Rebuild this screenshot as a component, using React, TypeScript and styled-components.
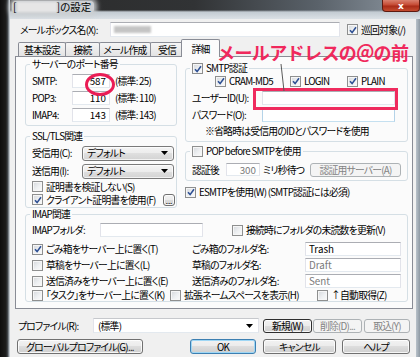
import React from "react";
import styled, { createGlobalStyle, css } from "styled-components";

const FONT = `"Noto Sans CJK JP", "Noto Sans", sans-serif`;

const GlobalStyle = createGlobalStyle`
  * { box-sizing: border-box; }
  html, body { margin: 0; padding: 0; }
  body { background: #141414; font-family: ${FONT}; }
`;

const Frame = styled.div`
  position: relative;
  width: 420px;
  height: 357px;
  overflow: hidden;
  display: flex;
  background: #141414;
  font-family: ${FONT};
  font-size: 9.8px;
  font-feature-settings: "palt" 1;
  letter-spacing: -0.75px;
  line-height: 12px;
  color: #000;
`;

const DarkEdge = styled.div`
  width: 10px;
  flex: none;
  background: linear-gradient(90deg, #0e0e0e 0, #1d1d1d 6px, #4a5056 8px, #aab2b9 9px, #d2d8de 10px);
`;

const Window = styled.div`
  flex: 1;
  min-width: 0;
  display: flex;
  flex-direction: column;
`;

const TitleBar = styled.div`
  height: 19px;
  flex: none;
  display: flex;
  align-items: flex-start;
  padding-left: 2px;
  background:
    linear-gradient(180deg, rgba(0,0,0,0) 0, rgba(0,0,0,0) 10px, #c3cbd2 12px, #dbe1e6 19px),
    linear-gradient(90deg, #2a2a2a 0, #313335 45%, #5a626a 75%, #8f99a3 100%);
`;

const TitleGlow = styled.div`
  margin-top: 1px;
  height: 12px;
  display: flex;
  align-items: center;
  padding: 0 3px 0 1px;
  background: #cdd0d3;
  border-radius: 4px;
  box-shadow: 0 0 5px 3px rgba(205, 208, 211, 0.9);
  font-size: 10.5px;
  line-height: 12px;
  letter-spacing: 0;
`;

const Blurred = styled.span<{ $w: number; $h: number; $c: string }>`
  display: inline-block;
  width: ${(p) => p.$w}px;
  height: ${(p) => p.$h}px;
  background: ${(p) => p.$c};
  filter: blur(1.2px);
  flex: none;
`;

const CloseButton = styled.div`
  margin-left: auto;
  width: 38px;
  height: 12px;
  flex: none;
  display: flex;
  align-items: center;
  justify-content: center;
  color: #fff;
  font-family: "DejaVu Sans", sans-serif;
  font-weight: bold;
  font-size: 9px;
  line-height: 10px;
  letter-spacing: 0;
  border: 1px solid #5e1a10;
  border-top: none;
  border-radius: 0 0 4px 4px;
  background: linear-gradient(180deg, #d9806e 0%, #c54a33 45%, #a92b17 55%, #c44c30 100%);
`;

const WindowBody = styled.div`
  flex: 1;
  display: flex;
  min-height: 0;
`;

const Client = styled.div`
  width: 406px;
  flex: none;
  background: #f0f0f0;
  display: flex;
  flex-direction: column;
`;

const RightFrame = styled.div`
  flex: 1;
  background: linear-gradient(90deg, #b9c2ca, #8e99a3);
`;

const Row = styled.div<{ $h: number; $mt?: number; $pl?: number }>`
  display: flex;
  align-items: center;
  height: ${(p) => p.$h}px;
  flex: none;
  margin-top: ${(p) => p.$mt ?? 0}px;
  padding-left: ${(p) => p.$pl ?? 0}px;
  white-space: nowrap;
`;

const Lbl = styled.span<{ $w?: number; $ml?: number; $muted?: boolean }>`
  flex: none;
  white-space: nowrap;
  ${(p) => p.$w !== undefined && css`width: ${p.$w}px;`}
  margin-left: ${(p) => p.$ml ?? 0}px;
  color: ${(p) => (p.$muted ? "#6d6d6d" : "#000")};
`;

const TextBox = styled.div<{ $w: number; $h?: number; $align?: "left" | "right"; $muted?: boolean; $hot?: boolean; $ml?: number }>`
  width: ${(p) => p.$w}px;
  height: ${(p) => p.$h ?? 14}px;
  flex: none;
  margin-left: ${(p) => p.$ml ?? 0}px;
  display: flex;
  align-items: center;
  justify-content: ${(p) => (p.$align === "right" ? "flex-end" : "flex-start")};
  padding: 0 3px;
  background: #fff;
  letter-spacing: 0;
  color: ${(p) => (p.$muted ? "#7a7a7a" : "#000")};
  border: 1px solid;
  border-color: #abadb3 #e2e3ea #e3e9ef #e2e3ea;
  ${(p) => p.$hot && css`border-color: #5a95c0 #b5d3e8 #c5e0f0 #b5d3e8;`}
  overflow: hidden;
`;

const Drop = styled.div<{ $w: number }>`
  width: ${(p) => p.$w}px;
  height: 15px;
  flex: none;
  display: flex;
  align-items: center;
  justify-content: space-between;
  padding: 0 5px 0 4px;
  border: 1px solid #7a7a7a;
  border-radius: 3px;
  background: linear-gradient(180deg, #f4f4f4 0%, #ececec 50%, #dfdfdf 50%, #d3d3d3 100%);
  box-shadow: inset 0 0 0 1px rgba(255, 255, 255, 0.7);
`;

const Combo = styled.div<{ $w: number }>`
  width: ${(p) => p.$w}px;
  height: 15px;
  flex: none;
  display: flex;
  align-items: center;
  justify-content: space-between;
  padding: 0 5px 0 4px;
  background: #fff;
  border: 1px solid;
  border-color: #c6c8cc #e2e3ea #e3e9ef #e2e3ea;
`;

const Arrow = () => (
  <svg width="7" height="4" viewBox="0 0 7 4">
    <path d="M0 0 H7 L3.5 4 Z" fill="#000" />
  </svg>
);

type BtnKind = "normal" | "disabled" | "default" | "strong";

const Btn = styled.div<{ $w: number; $h?: number; $ml?: number; $kind?: BtnKind }>`
  width: ${(p) => p.$w}px;
  height: ${(p) => p.$h ?? 15}px;
  flex: none;
  margin-left: ${(p) => p.$ml ?? 0}px;
  display: flex;
  align-items: center;
  justify-content: center;
  border-radius: 3px;
  border: 1px solid #707070;
  background: linear-gradient(180deg, #f2f2f2 0%, #ebebeb 50%, #dddddd 50%, #cfcfcf 100%);
  box-shadow: inset 0 0 0 1px rgba(255, 255, 255, 0.8);
  color: #000;
  ${(p) =>
    p.$kind === "disabled" &&
    css`
      border-color: #adb2b5;
      background: #f4f4f4;
      box-shadow: none;
      color: #838383;
    `}
  ${(p) =>
    p.$kind === "default" &&
    css`
      border-color: #3c7fb1;
      box-shadow: inset 0 0 0 1px #9fd7f5;
    `}
  ${(p) =>
    p.$kind === "strong" &&
    css`
      border-color: #2f2f2f;
    `}
`;

const Dots = styled.span`
  font-size: 8px;
  line-height: 8px;
  letter-spacing: 0;
  margin-top: 2px;
`;

const CheckWrap = styled.span<{ $w?: number; $ml?: number }>`
  display: inline-flex;
  align-items: center;
  gap: 3px;
  flex: none;
  white-space: nowrap;
  ${(p) => p.$w !== undefined && css`width: ${p.$w}px;`}
  margin-left: ${(p) => p.$ml ?? 0}px;
`;

const CbBox = styled.span`
  width: 11px;
  height: 11px;
  flex: none;
  display: inline-flex;
  align-items: center;
  justify-content: center;
  border: 1px solid #8e8f8f;
  background: linear-gradient(135deg, #d4d7db 0%, #eef0f2 55%, #fbfbfb 100%);
  box-shadow: inset 0 0 0 1px #f6f6f6;
`;

const Check = ({ on, children, w, ml }: { on?: boolean; children?: React.ReactNode; w?: number; ml?: number }) => (
  <CheckWrap $w={w} $ml={ml}>
    <CbBox>
      {on && (
        <svg width="8" height="8" viewBox="0 0 8 8">
          <path d="M1 4.3 L3.1 6.6 L7 1.2" fill="none" stroke="#2d4f93" strokeWidth="1.6" />
        </svg>
      )}
    </CbBox>
    {children && <span>{children}</span>}
  </CheckWrap>
);

const TabStrip = styled.div`
  display: flex;
  align-items: flex-end;
  height: 17px;
  margin-top: 2px;
  padding-left: 8px;
  position: relative;
  z-index: 1;
  flex: none;
`;

const Tab = styled.div<{ $w: number; $active?: boolean }>`
  width: ${(p) => p.$w}px;
  height: 14px;
  flex: none;
  display: flex;
  align-items: center;
  justify-content: center;
  border: 1px solid #898c95;
  border-bottom: none;
  margin-right: -1px;
  border-radius: 2px 2px 0 0;
  background: linear-gradient(180deg, #f6f6f6 0%, #ececec 50%, #e3e3e3 100%);
  ${(p) =>
    p.$active &&
    css`
      height: 18px;
      margin-bottom: -1px;
      margin-left: -2px;
      background: #fbfbfb;
      position: relative;
      z-index: 2;
    `}
`;

const Panel = styled.div`
  margin: 0 3px 0 5px;
  height: 253px;
  flex: none;
  border: 1px solid #898c95;
  background: #fbfbfb;
  display: grid;
  grid-template-columns: 152px 223px;
  column-gap: 8px;
  align-content: start;
  align-items: start;
  padding: 1px 4px 0 9px;
`;

const Column = styled.div`
  display: flex;
  flex-direction: column;
`;

const Group = styled.fieldset<{ $mt?: number; $pt?: number; $pb?: number; $full?: boolean }>`
  margin: ${(p) => p.$mt ?? 0}px 0 0;
  padding: ${(p) => p.$pt ?? 1}px 6px ${(p) => p.$pb ?? 0}px 6px;
  min-width: 0;
  border: 1px solid #d5dfe5;
  border-radius: 3px;
  ${(p) => p.$full && css`grid-column: 1 / -1;`}
`;

const Legend = styled.legend`
  padding: 0 2px;
  margin-left: -2px;
  height: 13px;
  line-height: 13px;
`;

const LegendInner = styled.span`
  display: flex;
  align-items: center;
  gap: 3px;
  height: 13px;
`;

const Overlay = styled.svg`
  position: absolute;
  left: 0;
  top: 0;
  pointer-events: none;
`;

const Callout = styled.div`
  position: absolute;
  left: 217px;
  top: 42px;
  font-family: ${FONT};
  font-weight: 700;
  font-size: 18px;
  line-height: 20px;
  letter-spacing: -0.6px;
  font-feature-settings: normal;
  color: #f0285c;
  white-space: nowrap;
`;

export default function App() {
  return (
    <>
      <GlobalStyle />
      <Frame>
        <DarkEdge />
        <Window>
          <TitleBar>
            <TitleGlow>
              <span>[</span>
              <Blurred $w={40} $h={10} $c="#e6e6e6" />
              <span>]の設定</span>
            </TitleGlow>
            <CloseButton>x</CloseButton>
          </TitleBar>
          <WindowBody>
            <Client>
              <Row $h={15} $mt={3} $pl={10}>
                <Lbl $w={90}>メールボックス名(X):</Lbl>
                <TextBox $w={230} $h={15}>
                  <Blurred $w={37} $h={7} $c="#c4c4c4" />
                </TextBox>
                <Check on ml={7}>巡回対象(/)</Check>
              </Row>

              <TabStrip>
                <Tab $w={48}>基本設定</Tab>
                <Tab $w={35}>接続</Tab>
                <Tab $w={52}>メール作成</Tab>
                <Tab $w={34}>受信</Tab>
                <Tab $w={39} $active>詳細</Tab>
              </TabStrip>

              <Panel>
                <Column>
                  <Group $pb={2}>
                    <Legend>サーバーのポート番号</Legend>
                    <Row $h={17}>
                      <Lbl $w={40}>SMTP:</Lbl>
                      <TextBox $w={38} $align="right">587</TextBox>
                      <Lbl $ml={5}>(標準: 25)</Lbl>
                    </Row>
                    <Row $h={17}>
                      <Lbl $w={40}>POP3:</Lbl>
                      <TextBox $w={38} $align="right">110</TextBox>
                      <Lbl $ml={5}>(標準: 110)</Lbl>
                    </Row>
                    <Row $h={17}>
                      <Lbl $w={40}>IMAP4:</Lbl>
                      <TextBox $w={38} $align="right">143</TextBox>
                      <Lbl $ml={5}>(標準: 143)</Lbl>
                    </Row>
                  </Group>

                  <Group $mt={4} $pb={1}>
                    <Legend>SSL/TLS関連</Legend>
                    <Row $h={18}>
                      <Lbl $w={50}>受信用(C):</Lbl>
                      <Drop $w={92}>
                        <span>デフォルト</span>
                        <Arrow />
                      </Drop>
                    </Row>
                    <Row $h={18}>
                      <Lbl $w={50}>送信用(I):</Lbl>
                      <Drop $w={92}>
                        <span>デフォルト</span>
                        <Arrow />
                      </Drop>
                    </Row>
                    <Row $h={13}>
                      <Check>証明書を検証しない(S)</Check>
                    </Row>
                    <Row $h={13}>
                      <Check on w={131}>クライアント証明書を使用(F)</Check>
                      <Btn $w={12} $h={12}>
                        <Dots>...</Dots>
                      </Btn>
                    </Row>
                  </Group>
                </Column>

                <Column>
                  <Group $mt={4} $pt={0} $pb={3}>
                    <Legend>
                      <LegendInner>
                        <Check on />
                        <span>SMTP認証</span>
                      </LegendInner>
                    </Legend>
                    <Row $h={12} $pl={23}>
                      <Check on w={75}>CRAM-MD5</Check>
                      <Check on w={57}>LOGIN</Check>
                      <Check on>PLAIN</Check>
                    </Row>
                    <Row $h={16} $mt={3}>
                      <Lbl $w={70}>ユーザーID(U):</Lbl>
                      <TextBox $w={133} />
                    </Row>
                    <Row $h={16} $mt={1}>
                      <Lbl $w={70}>パスワード(O):</Lbl>
                      <TextBox $w={133} $hot />
                    </Row>
                    <Row $h={15} $pl={13}>
                      <span>※省略時は受信用のIDとパスワードを使用</span>
                    </Row>
                  </Group>

                  <Group $mt={3} $pt={4} $pb={3}>
                    <Legend>
                      <LegendInner>
                        <Check />
                        <span>POP before SMTPを使用</span>
                      </LegendInner>
                    </Legend>
                    <Row $h={15}>
                      <Lbl $w={34}>認証後</Lbl>
                      <TextBox $w={34} $h={13} $align="right" $muted>300</TextBox>
                      <Lbl $w={47} $ml={3}>ミリ秒待つ</Lbl>
                      <Btn $w={91} $h={14} $kind="disabled">認証用サーバー(A)</Btn>
                    </Row>
                  </Group>

                  <Row $h={12} $mt={5}>
                    <Check on>ESMTPを使用(W) (SMTP認証には必須)</Check>
                  </Row>
                </Column>

                <Group $full $pb={0}>
                  <Legend>IMAP関連</Legend>
                  <Row $h={16}>
                    <Lbl $w={68}>IMAPフォルダ:</Lbl>
                    <TextBox $w={103} />
                    <Check ml={29}>接続時にフォルダの未読数を更新(V)</Check>
                  </Row>
                  <Row $h={16} $mt={3}>
                    <Check on w={160}>ごみ箱をサーバー上に置く(T)</Check>
                    <Lbl $w={113}>ごみ箱のフォルダ名:</Lbl>
                    <TextBox $w={96}>Trash</TextBox>
                  </Row>
                  <Row $h={16}>
                    <Check w={160}>草稿をサーバー上に置く(L)</Check>
                    <Lbl $w={113}>草稿のフォルダ名:</Lbl>
                    <TextBox $w={96} $muted>Draft</TextBox>
                  </Row>
                  <Row $h={16}>
                    <Check w={160}>送信済みをサーバー上に置く(E)</Check>
                    <Lbl $w={113}>送信済みのフォルダ名:</Lbl>
                    <TextBox $w={96} $muted>Sent</TextBox>
                  </Row>
                  <Row $h={12}>
                    <Check w={138}>「タスク」をサーバー上に置く(K)</Check>
                    <Check w={147}>拡張ネームスペースを表示(H)</Check>
                    <Check>↑自動取得(Z)</Check>
                  </Row>
                </Group>
              </Panel>

              <Row $h={15} $mt={9} $pl={8}>
                <Lbl $w={75}>プロファイル(R):</Lbl>
                <Combo $w={166}>
                  <span>(標準)</span>
                  <Arrow />
                </Combo>
                <Btn $w={49} $h={14} $ml={4} $kind="strong">新規(W)</Btn>
                <Btn $w={49} $h={14} $ml={1} $kind="disabled">削除(D)...</Btn>
                <Btn $w={46} $h={14} $ml={2} $kind="disabled">取込(Y)</Btn>
              </Row>

              <Row $h={15} $mt={6} $pl={7}>
                <Btn $w={126}>グローバルプロファイル(G)...</Btn>
                <Btn $w={66} $ml={47} $kind="default">OK</Btn>
                <Btn $w={73} $ml={7}>キャンセル</Btn>
                <Btn $w={68} $ml={6}>ヘルプ</Btn>
              </Row>
            </Client>
            <RightFrame />
          </WindowBody>
        </Window>

        <Overlay width="420" height="357" viewBox="0 0 420 357">
          <ellipse cx="100" cy="84.5" rx="13.5" ry="10" fill="none" stroke="#ea1d55" strokeWidth="3" />
          <rect x="254.5" y="89.5" width="142" height="19" fill="none" stroke="#ef2b5e" strokeWidth="3" />
          <line x1="281" y1="64" x2="284" y2="91" stroke="#5a5a5a" strokeWidth="1" />
        </Overlay>
        <Callout>メールアドレスの＠の前</Callout>
      </Frame>
    </>
  );
}
